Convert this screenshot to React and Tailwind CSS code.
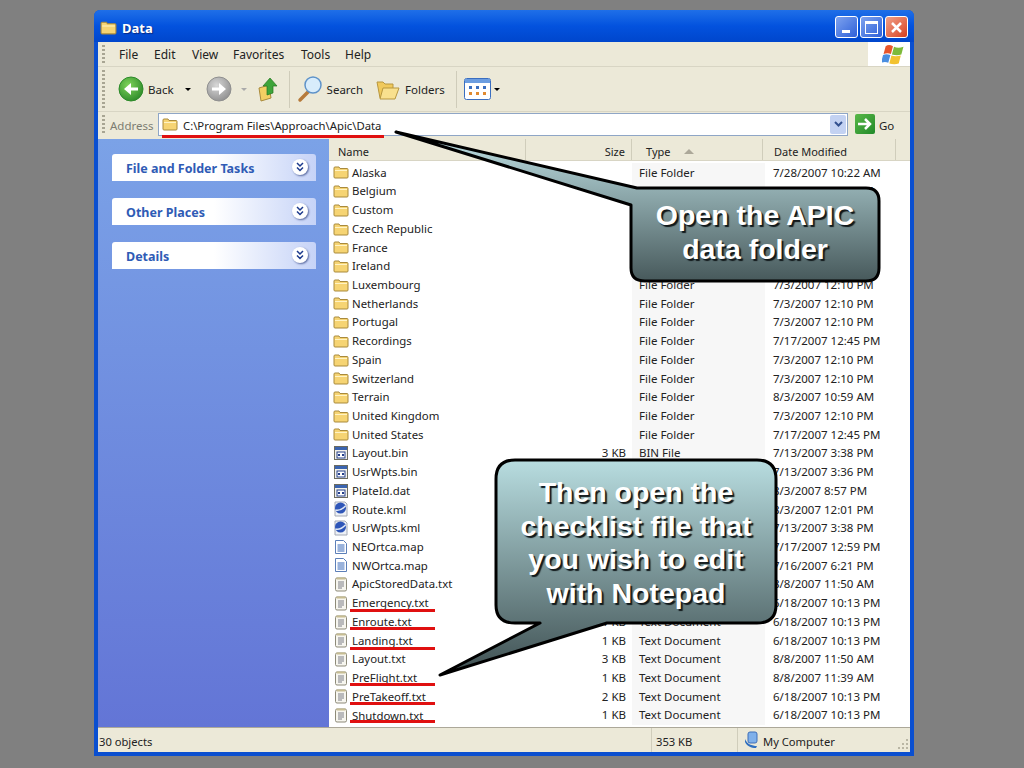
import React from 'react';

const F = 'File Folder';
const T = 'Text Document';
// rows wholly behind the callouts only keep their name
const rows = [
  ['folder', 'Alaska', '', F, '7/28/2007 10:22 AM'],
  ['folder', 'Belgium', '', F, '7/3/2007 12:10 PM'],
  ['folder', 'Custom', '', '', ''],
  ['folder', 'Czech Republic', '', '', ''],
  ['folder', 'France', '', '', ''],
  ['folder', 'Ireland', '', '', ''],
  ['folder', 'Luxembourg', '', F, '7/3/2007 12:10 PM'],
  ['folder', 'Netherlands', '', F, '7/3/2007 12:10 PM'],
  ['folder', 'Portugal', '', F, '7/3/2007 12:10 PM'],
  ['folder', 'Recordings', '', F, '7/17/2007 12:45 PM'],
  ['folder', 'Spain', '', F, '7/3/2007 12:10 PM'],
  ['folder', 'Switzerland', '', F, '7/3/2007 12:10 PM'],
  ['folder', 'Terrain', '', F, '8/3/2007 10:59 AM'],
  ['folder', 'United Kingdom', '', F, '7/3/2007 12:10 PM'],
  ['folder', 'United States', '', F, '7/17/2007 12:45 PM'],
  ['bin', 'Layout.bin', '3 KB', 'BIN File', '7/13/2007 3:38 PM'],
  ['bin', 'UsrWpts.bin', '', '', '7/13/2007 3:36 PM'],
  ['bin', 'PlateId.dat', '', '', '8/3/2007 8:57 PM'],
  ['kml', 'Route.kml', '', '', '8/3/2007 12:01 PM'],
  ['kml', 'UsrWpts.kml', '', '', '7/13/2007 3:38 PM'],
  ['map', 'NEOrtca.map', '', '', '7/17/2007 12:59 PM'],
  ['map', 'NWOrtca.map', '', '', '7/16/2007 6:21 PM'],
  ['txt', 'ApicStoredData.txt', '', '', '8/8/2007 11:50 AM'],
  ['txt', 'Emergency.txt', '', '', '6/18/2007 10:13 PM'],
  ['txt', 'Enroute.txt', '1 KB', T, '6/18/2007 10:13 PM'],
  ['txt', 'Landing.txt', '1 KB', T, '6/18/2007 10:13 PM'],
  ['txt', 'Layout.txt', '3 KB', T, '8/8/2007 11:50 AM'],
  ['txt', 'PreFlight.txt', '1 KB', T, '8/8/2007 11:39 AM'],
  ['txt', 'PreTakeoff.txt', '2 KB', T, '6/18/2007 10:13 PM'],
  ['txt', 'Shutdown.txt', '1 KB', T, '6/18/2007 10:13 PM'],
];

const FolderIcon = ({ size = 16 }) => (
  <svg width={size} height={size} viewBox="0 0 16 16" className="shrink-0">
    <path d="M1 13V4q0-1 1-1h4l1 1.500h7q1 0 1 1V13q0 1-1 1H2q-1 0-1-1z" fill="#f6d473" stroke="#a98a3c" />
    <path d="M2 6h12v1H2z" fill="#fff3c4" />
  </svg>
);

const BinIcon = () => (
  <svg width="16" height="16" viewBox="0 0 16 16" className="shrink-0">
    <rect x="1.500" y="1.500" width="13" height="13" fill="#f4f2ea" stroke="#6b6b60" />
    <rect x="2" y="2" width="12" height="3" fill="#3a64b0" />
    <rect x="4" y="7" width="8" height="6" fill="#fff" stroke="#25408a" />
    <path d="M5 9h2v2H5zM9 9h2v2H9z" fill="#25408a" />
  </svg>
);

const KmlIcon = () => (
  <svg width="16" height="16" viewBox="0 0 16 16" className="shrink-0">
    <path d="M2 1h10l2 2v12H2z" fill="#eef1f6" stroke="#a4a9b5" />
    <circle cx="7.500" cy="7" r="5.500" fill="#2f56b8" />
    <path d="M2.500 9c3 1 7-1 10-4" stroke="#dfe7f6" strokeWidth="1.500" fill="none" />
  </svg>
);

const MapIcon = () => (
  <svg width="16" height="16" viewBox="0 0 16 16" className="shrink-0">
    <path d="M2.500 1.500h8l3 3v10h-11z" fill="#fff" stroke="#5c7fb8" />
    <path d="M4.500 6h7M4.500 8h7M4.500 10h7M4.500 12h7" stroke="#3566b8" />
  </svg>
);

const TxtIcon = () => (
  <svg width="16" height="16" viewBox="0 0 16 16" className="shrink-0">
    <rect x="2.500" y="2" width="11" height="13" rx="1.500" fill="#f7f6ef" stroke="#8d8a78" />
    <path d="M3.500 1.500h9v2h-9z" fill="#c7bd92" />
    <path d="M5 6h6M5 8h6M5 10h6M5 12h4" stroke="#7d7f88" />
  </svg>
);

const icons = { folder: FolderIcon, bin: BinIcon, kml: KmlIcon, map: MapIcon, txt: TxtIcon };

const Caret = ({ className = 'border-t-black' }) => (
  <span className={`block w-0 h-0 border-x-[3px] border-x-transparent border-t-[3px] ${className}`} />
);

const Grip = () => (
  <div className="w-[3px] self-stretch my-[3px] bg-[repeating-linear-gradient(to_bottom,#a8a593_0,#a8a593_2px,transparent_2px,transparent_4px)]" />
);

const NavArrow = ({ back, color, dark }) => (
  <svg width="26" height="26" viewBox="0 0 26 26" className="shrink-0">
    <defs>
      <radialGradient id={back ? 'navA' : 'navB'} cx="40%" cy="35%" r="70%">
        <stop offset="0" stopColor={color} />
        <stop offset="1" stopColor={dark} />
      </radialGradient>
    </defs>
    <circle cx="13" cy="13" r="12" fill={back ? 'url(#navA)' : 'url(#navB)'} stroke={dark} />
    <path
      d={back ? 'M20 11.500h-7V7l-7 6 7 6v-4.500h7z' : 'M6 11.500h7V7l7 6-7 6v-4.500H6z'}
      fill="#fff"
    />
  </svg>
);

const TaskPanel = ({ title }) => (
  <div className="h-[27px] rounded-t-[3px] bg-gradient-to-r from-white via-white to-[#c6d3f7] pl-[14px] pr-[8px] pt-[3px] flex items-center justify-between">
    <span className="text-[12.5px] font-bold text-[#2f5bb5]">{title}</span>
    <span className="w-[16px] h-[16px] rounded-full bg-white shadow-[1px_1px_2px_#5a6aa0] flex items-center justify-center -translate-y-[2px]">
      <svg width="10" height="10" viewBox="0 0 10 10">
        <path d="M2 1l3 3 3-3M2 5.500l3 3 3-3" stroke="#1c3a8c" strokeWidth="1.500" fill="none" />
      </svg>
    </span>
  </div>
);

const HeaderCell = ({ className, children }) => (
  <div className={`h-full flex items-center pt-[3px] border-r border-[#d0cdbb] ${className}`}>{children}</div>
);

const FileRow = ({ kind, name, size, type, date }) => {
  const Icon = icons[kind];
  return (
    <div className="h-[18.72px] flex items-center">
      <div className="w-[197px] flex items-center gap-[3px] pl-[4px] text-[11.4px]">
        <Icon />
        <span>{name}</span>
      </div>
      <div className="w-[106px] pr-[6px] text-right">{size}</div>
      <div className="h-full w-[133px] bg-[#f7f7f7] flex items-center pl-[7px]">{type}</div>
      <div className="pl-[8px]">{date}</div>
    </div>
  );
};

const Callout = ({ className, viewBox, d, id, top, bottom, children, textClass }) => (
  <div className={`absolute ${className}`}>
    <svg viewBox={viewBox} className="absolute inset-0 w-full h-full">
      <defs>
        <linearGradient id={id} x1="0" y1="0" x2="0" y2="1">
          <stop offset="0" stopColor={top} />
          <stop offset="1" stopColor={bottom} />
        </linearGradient>
      </defs>
      <path d={d} fill={`url(#${id})`} stroke="#000" strokeWidth="3" strokeLinejoin="round" />
    </svg>
    <div className={`absolute text-center font-bold text-white font-['Liberation_Sans',sans-serif] [text-shadow:2px_2px_1px_#11181a] ${textClass}`}>
      {children}
    </div>
  </div>
);

export default function App() {
  return (
    <div className="relative w-[1024px] h-[768px] bg-[#808080] pt-[10px] pl-[94px] overflow-hidden font-['Noto_Sans',sans-serif] text-[11.5px] text-[#222] leading-none">
      <div className="w-[820px] h-[746px] rounded-t-[6px] bg-[#0a4fd0] flex flex-col px-[4px] pb-[4px] overflow-hidden">
        {/* title bar */}
        <div className="-mx-[4px] h-[32px] shrink-0 bg-gradient-to-b from-[#1f6fe8] via-[#0352de] to-[#0046cc] flex items-center pl-[6px] pr-[6px] pt-[2px] gap-[5px]">
          <FolderIcon size={17} />
          <span className="text-white font-bold text-[13px] pt-[3px] [text-shadow:1px_1px_1px_#0a2a80]">Data</span>
          <div className="ml-auto flex gap-[2px]">
            <div className="w-[23px] h-[22px] rounded-[3px] border border-white bg-gradient-to-br from-[#7ea2ee] to-[#2f5fd8] flex items-end pl-[6px] pb-[4px]">
              <div className="w-[8px] h-[3px] bg-white" />
            </div>
            <div className="w-[23px] h-[22px] rounded-[3px] border border-white bg-gradient-to-br from-[#7ea2ee] to-[#2f5fd8] flex items-center justify-center">
              <div className="w-[13px] h-[13px] border border-white border-t-[3px]" />
            </div>
            <div className="w-[23px] h-[22px] rounded-[3px] border border-white bg-gradient-to-br from-[#f0a088] to-[#d63c1a] flex items-center justify-center">
              <svg width="13" height="13" viewBox="0 0 13 13">
                <path d="M2 2l9 9M11 2l-9 9" stroke="#fff" strokeWidth="2.500" />
              </svg>
            </div>
          </div>
        </div>

        {/* menu */}
        <div className="h-[25px] shrink-0 bg-[#ece9d8] flex items-center border-b border-[#d8d5c4] pl-[4px] text-[12px]">
          <Grip />
          <div className="flex ml-[14px] pt-[2px]">
            <span className="w-[35px]">File</span>
            <span className="w-[38px]">Edit</span>
            <span className="w-[41px]">View</span>
            <span className="w-[68px]">Favorites</span>
            <span className="w-[44px]">Tools</span>
            <span>Help</span>
          </div>
          <div className="ml-auto w-[42px] h-full bg-white flex items-center justify-center pl-[8px]">
            <svg width="23" height="21" viewBox="0 0 22 20">
              <path d="M3.500 2q3-2 7 0l-2 7.500q-3-1.500-7 0z" fill="#e8552b" />
              <path d="M11.500 2.500q4 2 9 0L18.500 10q-4 1.500-9 0z" fill="#7dba3a" />
              <path d="M1 10.500q3-1.500 7 0L6 18q-3-1.500-7 0z" fill="#4a8ee0" />
              <path d="M9 11q4 1.500 9 0l-2 7.500q-4 1.500-9 0z" fill="#f2c230" />
            </svg>
          </div>
        </div>

        {/* toolbar */}
        <div className="h-[45px] shrink-0 bg-[#ece9d8] flex items-center border-b border-[#d8d5c4] pl-[4px]">
          <Grip />
          <div className="ml-[13px]"><NavArrow back color="#7fd45a" dark="#2d8a2a" /></div>
          <span className="ml-[4px] mt-[2px]">Back</span>
          <div className="ml-[11px]"><Caret /></div>
          <div className="ml-[15px]"><NavArrow color="#d8d8d8" dark="#8f8f8f" /></div>
          <div className="ml-[9px]"><Caret className="border-t-[#aaa]" /></div>
          <svg width="24" height="26" viewBox="0 0 24 26" className="ml-[10px] shrink-0">
            <path d="M2 12l10-3 2 13-10 3z" fill="#f3cf63" stroke="#a98a3c" />
            <path d="M10 19V10H6l7-8 7 8h-4v7z" fill="#3ea43a" stroke="#22761f" strokeWidth=".7" />
          </svg>
          <div className="w-px h-[37px] bg-[#cfccba] ml-[8px]" />
          <svg width="27" height="28" viewBox="0 0 27 28" className="ml-[7px] shrink-0">
            <path d="M11 17L3 25" stroke="#b67a3a" strokeWidth="3.500" strokeLinecap="round" />
            <circle cx="16" cy="10" r="8" fill="#d8ecfb" stroke="#5f93c9" strokeWidth="1.500" />
          </svg>
          <span className="ml-[3px] mt-[2px]">Search</span>
          <svg width="25" height="24" viewBox="0 0 25 24" className="ml-[13px] shrink-0">
            <path d="M1 5h6l2 2h8v14H4z" fill="#f0c95c" stroke="#b8973f" />
            <path d="M7 11h16l-4 11H4z" fill="#f9e08e" stroke="#b8973f" />
          </svg>
          <span className="ml-[4px] mt-[2px]">Folders</span>
          <div className="w-px h-[37px] bg-[#cfccba] ml-[11px]" />
          <svg width="27" height="22" viewBox="0 0 27 22" className="ml-[7px] shrink-0">
            <rect x=".5" y=".5" width="26" height="21" rx="2" fill="#fff" stroke="#3a6ec0" />
            <rect x="1" y="1" width="25" height="4" fill="#6c9de0" />
            <path d="M5 8h3v3H5zM12 8h3v3h-3zM19 8h3v3h-3z" fill="#3a6ec0" />
            <path d="M5 14h3v3H5zM12 14h3v3h-3zM19 14h3v3h-3z" fill="#e08a30" />
          </svg>
          <div className="ml-[3px]"><Caret /></div>
        </div>

        {/* address */}
        <div className="h-[27px] shrink-0 bg-[#ece9d8] flex items-center pl-[4px] pb-[3px]">
          <Grip />
          <span className="ml-[5px] w-[48px] pt-[3px] text-[#7d7d72]">Address</span>
          <div className="w-[690px] h-[23px] bg-white border border-[#8fa6c6] flex items-center pl-[3px] pr-[1px]">
            <FolderIcon />
            <span className="ml-[5px] pt-[3px] text-[11.3px]">C:\Program Files\Approach\Apic\Data</span>
            <div className="ml-auto w-[16px] h-[19px] rounded-[2px] bg-[#c3d2f2] flex items-center justify-center">
              <svg width="9" height="7" viewBox="0 0 9 7">
                <path d="M1 1l3.500 3.500L8 1" stroke="#33518f" strokeWidth="2" fill="none" />
              </svg>
            </div>
          </div>
          <div className="ml-[7px] w-[20px] h-[20px] rounded-[2px] bg-gradient-to-br from-[#58b848] to-[#1f8a2a] flex items-center justify-center">
            <svg width="16" height="14" viewBox="0 0 16 14">
              <path d="M1 7h12M8 2l5 5-5 5" stroke="#fff" strokeWidth="2.500" fill="none" />
            </svg>
          </div>
          <span className="ml-[4px] pt-[3px]">Go</span>
        </div>

        {/* body */}
        <div className="h-[588px] shrink-0 flex">
          <div className="w-[231px] bg-gradient-to-b from-[#7ba2e7] to-[#6375d6] pl-[14px] pr-[13px] pt-[15px] flex flex-col gap-[17px]">
            <TaskPanel title="File and Folder Tasks" />
            <TaskPanel title="Other Places" />
            <TaskPanel title="Details" />
          </div>
          <div className="flex-1 bg-white flex flex-col">
            <div className="h-[22px] shrink-0 bg-[#ece9d8] border-b border-[#d8d5c4] flex items-center text-[11px]">
              <HeaderCell className="w-[197px] pl-[9px]">Name</HeaderCell>
              <HeaderCell className="w-[106px] justify-end pr-[6px]">Size</HeaderCell>
              <HeaderCell className="w-[131px] pl-[14px] gap-[14px]">
                Type
                <span className="w-0 h-0 border-x-[5px] border-x-transparent border-b-[5px] border-b-[#aca899]" />
              </HeaderCell>
              <HeaderCell className="w-[133px] pl-[11px]">Date Modified</HeaderCell>
            </div>
            <div className="flex-1 overflow-hidden pt-[2px]">
              {rows.map(([kind, name, size, type, date]) => (
                <FileRow key={name} kind={kind} name={name} size={size} type={type} date={date} />
              ))}
            </div>
          </div>
        </div>

        {/* status bar */}
        <div className="flex-1 bg-[#ece9d8] border-t border-[#aca899] flex items-center pl-[1px] text-[11.2px]">
          <span className="w-[552px] pt-[3px]">30 objects</span>
          <span className="h-full w-[86px] border-l border-[#d0cdbb] flex items-center pl-[4px] pt-[3px]">353 KB</span>
          <div className="h-full border-l border-[#d0cdbb] flex items-center pl-[6px] gap-[3px]">
            <svg width="16" height="18" viewBox="0 0 16 18">
              <rect x="4" y="1" width="9" height="11" rx="2" fill="#7fb0ea" stroke="#3f6fb8" />
              <path d="M1 8c2 5 7 7 12 7l-1 2C7 17 3 15 1 11z" fill="#2f6fc0" />
            </svg>
            <span className="pt-[3px]">My Computer</span>
          </div>
          <svg width="12" height="12" viewBox="0 0 12 12" className="ml-auto mr-[1px] self-end mb-[2px]">
            <path d="M9 1h2v2H9zM5 5h2v2H5zM9 5h2v2H9zM1 9h2v2H1zM5 9h2v2H5zM9 9h2v2H9z" fill="#b9b6a4" />
          </svg>
        </div>
      </div>

      {/* red marks */}
      <div className="absolute left-[162px] top-[135px] w-[222px] h-[3px] bg-[#e01010]" />
      <div className="absolute left-[350px] top-[609px] w-[85px] h-[3px] bg-[#e01010]" />
      <div className="absolute left-[350px] top-[627px] w-[85px] h-[3px] bg-[#e01010]" />
      <div className="absolute left-[350px] top-[647px] w-[85px] h-[3px] bg-[#e01010]" />
      <div className="absolute left-[350px] top-[683px] w-[85px] h-[3px] bg-[#e01010]" />
      <div className="absolute left-[350px] top-[702px] w-[85px] h-[3px] bg-[#e01010]" />
      <div className="absolute left-[350px] top-[720px] w-[85px] h-[3px] bg-[#e01010]" />

      <Callout
        className="left-[390px] top-[125px] w-[495px] h-[162px]"
        viewBox="0 0 495 162"
        id="calloutA"
        top="#c0e2e6"
        bottom="#47595b"
        d="M6 7L247 63H476Q489 63 489 76V143Q489 156 476 156H255Q241 156 241 143V80z"
        textClass="left-[241px] top-[73px] w-[248px] text-[28.5px] leading-[34px]"
      >
        Open the APIC<br />data folder
      </Callout>

      <Callout
        className="left-[435px] top-[455px] w-[348px] h-[225px]"
        viewBox="0 0 348 225"
        id="calloutB"
        top="#b8dde0"
        bottom="#3f5052"
        d="M80 5H322Q341 5 341 24V150Q341 168 322 168H172L5 220L105 168H80Q61 168 61 150V24Q61 5 80 5z"
        textClass="left-[61px] top-[21px] w-[280px] text-[28.5px] leading-[33.7px]"
      >
        Then open the<br />checklist file that<br />you wish to edit<br />with Notepad
      </Callout>
    </div>
  );
}
